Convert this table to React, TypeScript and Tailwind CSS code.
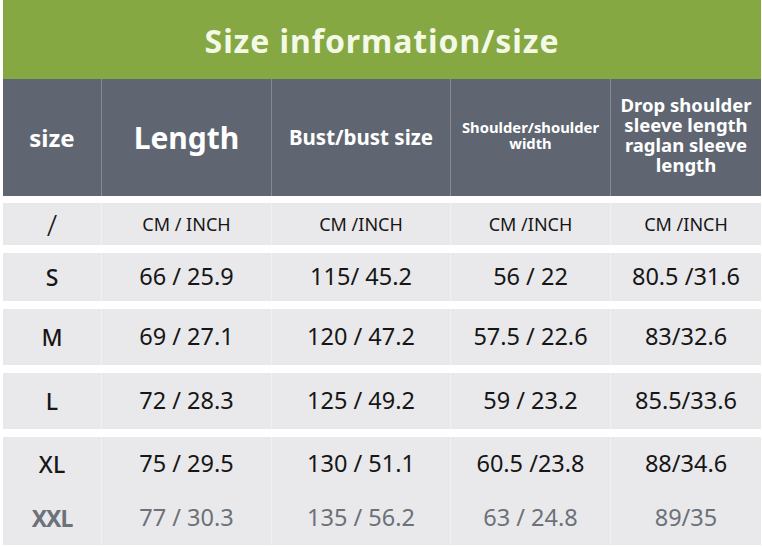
const cols = ["w-[98px]", "w-[170px]", "w-[179px]", "w-[160px]", "w-[151px]"];

type Row = { cells: string[]; h: string; muted?: boolean; gap?: boolean };

const rows: Row[] = [
  { cells: ["/", "CM / INCH", "CM /INCH", "CM /INCH", "CM /INCH"], h: "h-[42px]", gap: true },
  { cells: ["S", "66 / 25.9", "115/ 45.2", "56 / 22", "80.5 /31.6"], h: "h-[48px]", gap: true },
  { cells: ["M", "69 / 27.1", "120 / 47.2", "57.5 / 22.6", "83/32.6"], h: "h-[56px]", gap: true },
  { cells: ["L", "72 / 28.3", "125 / 49.2", "59 / 23.2", "85.5/33.6"], h: "h-[56px]", gap: true },
  { cells: ["XL", "75 / 29.5", "130 / 51.1", "60.5 /23.8", "88/34.6"], h: "h-[54px]" },
  { cells: ["XXL", "77 / 30.3", "135 / 56.2", "63 / 24.8", "89/35"], h: "h-[54px]", muted: true },
];

function cellText(row: number, col: number, muted?: boolean) {
  if (row === 0) return col === 0 ? "text-[30px] font-light" : "text-[18px]";
  if (col === 0) return muted ? "text-[23px] font-bold tracking-[-1px]" : "text-[23px] font-medium";
  return "text-[23.5px]";
}

export default function App() {
  return (
    <div
      className="w-[762px] h-[547px] overflow-hidden bg-white pl-[3px] pr-px"
      style={{ fontFamily: '"Noto Sans", "Open Sans", sans-serif' }}
    >
      <div className="flex h-[79px] items-center justify-center bg-[#85a843] pt-[3px]">
        <h1 className="text-[32px] font-bold leading-none tracking-[0.9px] text-[#f4f8e6]">Size information/size</h1>
      </div>

      <div className="flex h-[117px] bg-[#5f6672] text-white font-bold text-center">
        <div className={`${cols[0]} flex items-center justify-center text-[24px]`}>size</div>
        <div className={`${cols[1]} flex items-center justify-center border-l border-[#838a95] text-[30px]`}>Length</div>
        <div className={`${cols[2]} flex items-center justify-center border-l border-[#838a95] text-[20.5px]`}>Bust/bust size</div>
        <div className={`${cols[3]} flex flex-col items-center justify-center border-l border-[#838a95] text-[14.8px] leading-[16px] pb-[6px]`}>
          <span>Shoulder/shoulder</span>
          <span>width</span>
        </div>
        <div className={`${cols[4]} flex flex-col items-center justify-center border-l border-[#838a95] text-[18.5px] leading-[20px] pb-[6px]`}>
          <span>Drop shoulder</span>
          <span>sleeve length</span>
          <span>raglan sleeve</span>
          <span>length</span>
        </div>
      </div>

      <div className="h-[7px]" />

      {rows.map((r, i) => (
        <div key={i}>
          <div className={`flex ${r.h} bg-[#e9e9eb] ${r.muted ? "text-[#6c717a]" : "text-[#161616]"}`}>
            {r.cells.map((c, j) => (
              <div
                key={j}
                className={`${cols[j]} flex items-center justify-center ${j > 0 ? "border-l border-[#f1f1f3]" : ""} ${cellText(i, j, r.muted)}`}
              >
                {c}
              </div>
            ))}
          </div>
          {r.gap && <div className="h-[8px]" />}
        </div>
      ))}
    </div>
  );
}
